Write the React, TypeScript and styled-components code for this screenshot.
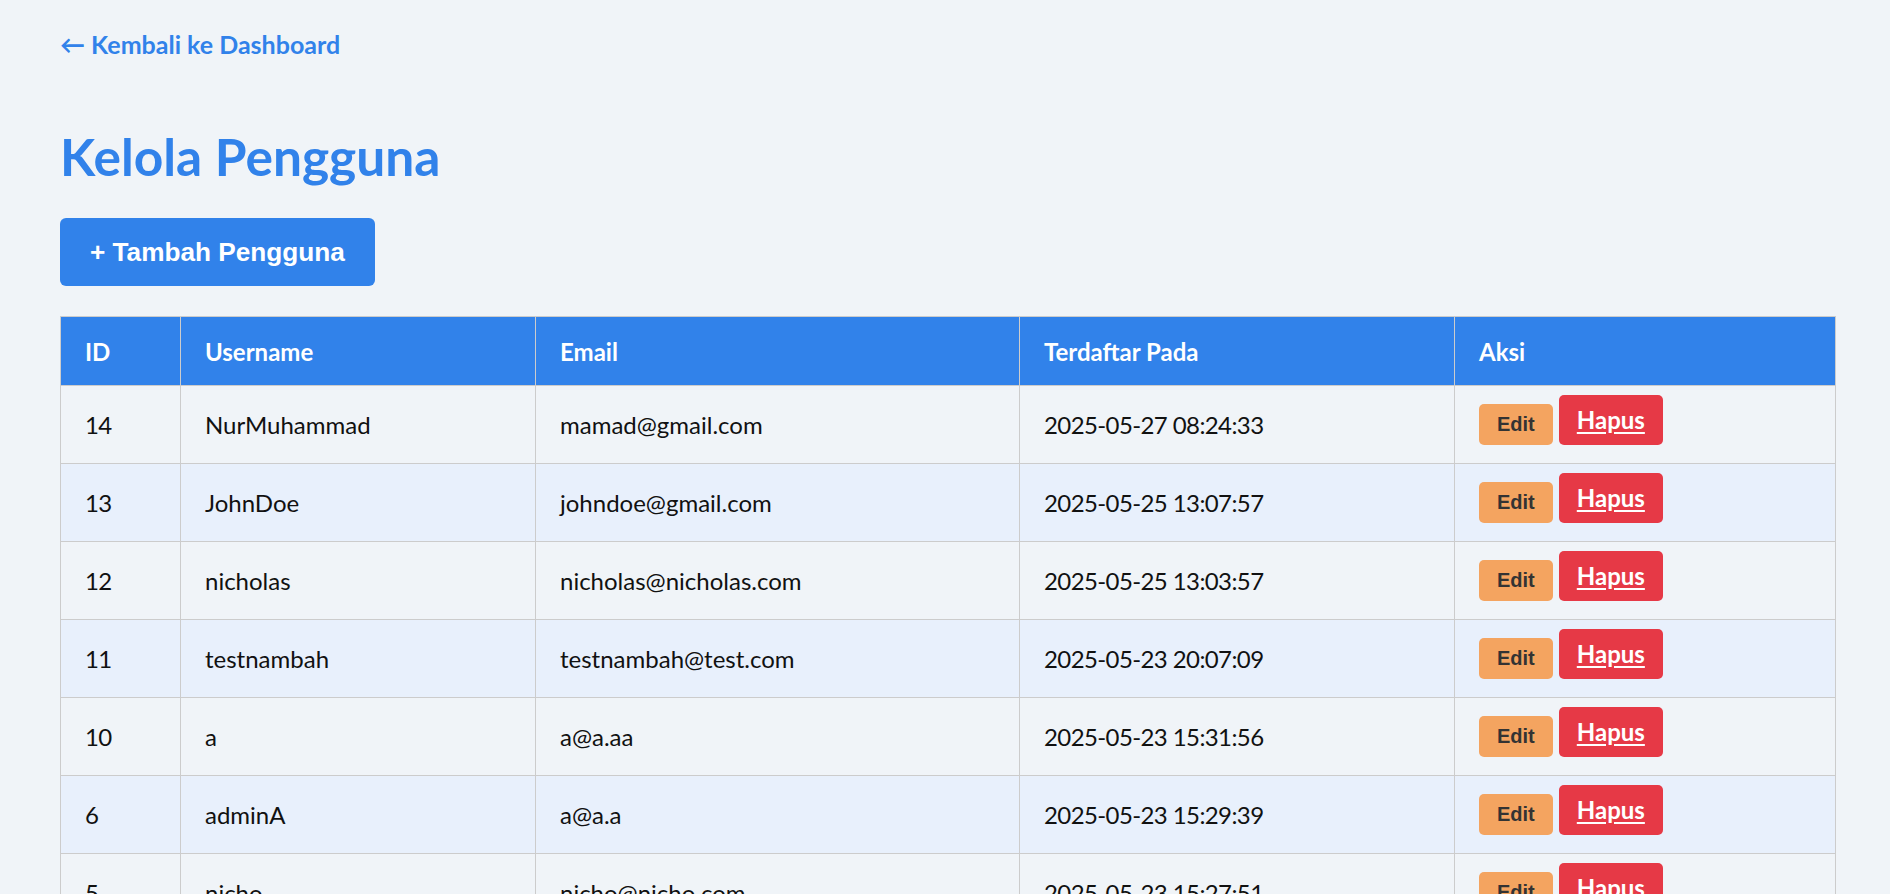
import React from "react";
import styled, { createGlobalStyle } from "styled-components";

const GlobalStyle = createGlobalStyle`
  html, body {
    margin: 0;
    padding: 0;
    background: #f0f4f8;
  }
  body {
    font-family: Lato, "Noto Sans", sans-serif;
    color: #111;
  }
`;

const Page = styled.div`
  display: flex;
  flex-direction: column;
  align-items: flex-start;
  padding: 29px 54px 40px 60px;
`;

const BackLink = styled.a`
  font-size: 25px;
  line-height: 30px;
  font-weight: 700;
  color: #3182ea;
  text-decoration: none;
`;

const Title = styled.h1`
  margin: 68px 0 0;
  font-size: 51.5px;
  line-height: 58px;
  font-weight: 700;
  color: #3182ea;
`;

const AddButton = styled.button`
  margin-top: 33px;
  padding: 19px 30px;
  border: none;
  border-radius: 6px;
  background: #3182ea;
  color: #fff;
  font-family: "Liberation Sans", Arial, sans-serif;
  font-size: 26.2px;
  line-height: 30px;
  font-weight: 700;
  cursor: pointer;
`;

const Table = styled.table`
  margin-top: 30px;
  width: 100%;
  border-collapse: collapse;
  table-layout: fixed;
  font-size: 24px;
`;

const HeadCell = styled.th`
  height: 68px;
  padding: 0 24px;
  background: #3182ea;
  color: #fff;
  font-weight: 700;
  text-align: left;
  border: 1px solid #cccccc;
`;

const Row = styled.tr<{ $alt: boolean }>`
  height: 78px;
  background: ${(p) => (p.$alt ? "#e8f0fc" : "#f0f4f8")};
`;

const Cell = styled.td<{ $numeric?: boolean }>`
  padding: 0 24px;
  border: 1px solid #cccccc;
  vertical-align: middle;
  color: #111;
  letter-spacing: ${(p) => (p.$numeric ? "-0.6px" : "normal")};
`;

const ActionCell = styled(Cell)`
  padding-bottom: 10px;
`;

const Actions = styled.div`
  display: flex;
  align-items: flex-end;
  gap: 6px;
`;

const EditButton = styled.button`
  padding: 9px 18px;
  border: none;
  border-radius: 5px;
  background: #f4a460;
  color: #333;
  font-family: "Liberation Sans", Arial, sans-serif;
  font-size: 20px;
  line-height: 23px;
  font-weight: 700;
  cursor: pointer;
`;

const DeleteLink = styled.a`
  display: inline-block;
  padding: 11px 18px;
  border-radius: 5px;
  background: #e63946;
  color: #fff;
  font-size: 24px;
  line-height: 28px;
  font-weight: 700;
  text-decoration: underline;
  text-underline-offset: 3px;
`;

const users = [
  { id: 14, username: "NurMuhammad", email: "mamad@gmail.com", created: "2025-05-27 08:24:33" },
  { id: 13, username: "JohnDoe", email: "johndoe@gmail.com", created: "2025-05-25 13:07:57" },
  { id: 12, username: "nicholas", email: "nicholas@nicholas.com", created: "2025-05-25 13:03:57" },
  { id: 11, username: "testnambah", email: "testnambah@test.com", created: "2025-05-23 20:07:09" },
  { id: 10, username: "a", email: "a@a.aa", created: "2025-05-23 15:31:56" },
  { id: 6, username: "adminA", email: "a@a.a", created: "2025-05-23 15:29:39" },
  { id: 5, username: "nicho", email: "nicho@nicho.com", created: "2025-05-23 15:27:51" },
];

export default function App() {
  return (
    <>
      <GlobalStyle />
      <Page>
        <BackLink href="#">← Kembali ke Dashboard</BackLink>
        <Title>Kelola Pengguna</Title>
        <AddButton>+ Tambah Pengguna</AddButton>
        <Table>
          <colgroup>
            <col style={{ width: 120 }} />
            <col style={{ width: 355 }} />
            <col style={{ width: 484 }} />
            <col style={{ width: 435 }} />
            <col />
          </colgroup>
          <thead>
            <tr>
              <HeadCell>ID</HeadCell>
              <HeadCell>Username</HeadCell>
              <HeadCell>Email</HeadCell>
              <HeadCell>Terdaftar Pada</HeadCell>
              <HeadCell>Aksi</HeadCell>
            </tr>
          </thead>
          <tbody>
            {users.map((u, i) => (
              <Row key={u.id} $alt={i % 2 === 1}>
                <Cell $numeric>{u.id}</Cell>
                <Cell>{u.username}</Cell>
                <Cell>{u.email}</Cell>
                <Cell $numeric>{u.created}</Cell>
                <ActionCell>
                  <Actions>
                    <EditButton>Edit</EditButton>
                    <DeleteLink href="#">Hapus</DeleteLink>
                  </Actions>
                </ActionCell>
              </Row>
            ))}
          </tbody>
        </Table>
      </Page>
    </>
  );
}
